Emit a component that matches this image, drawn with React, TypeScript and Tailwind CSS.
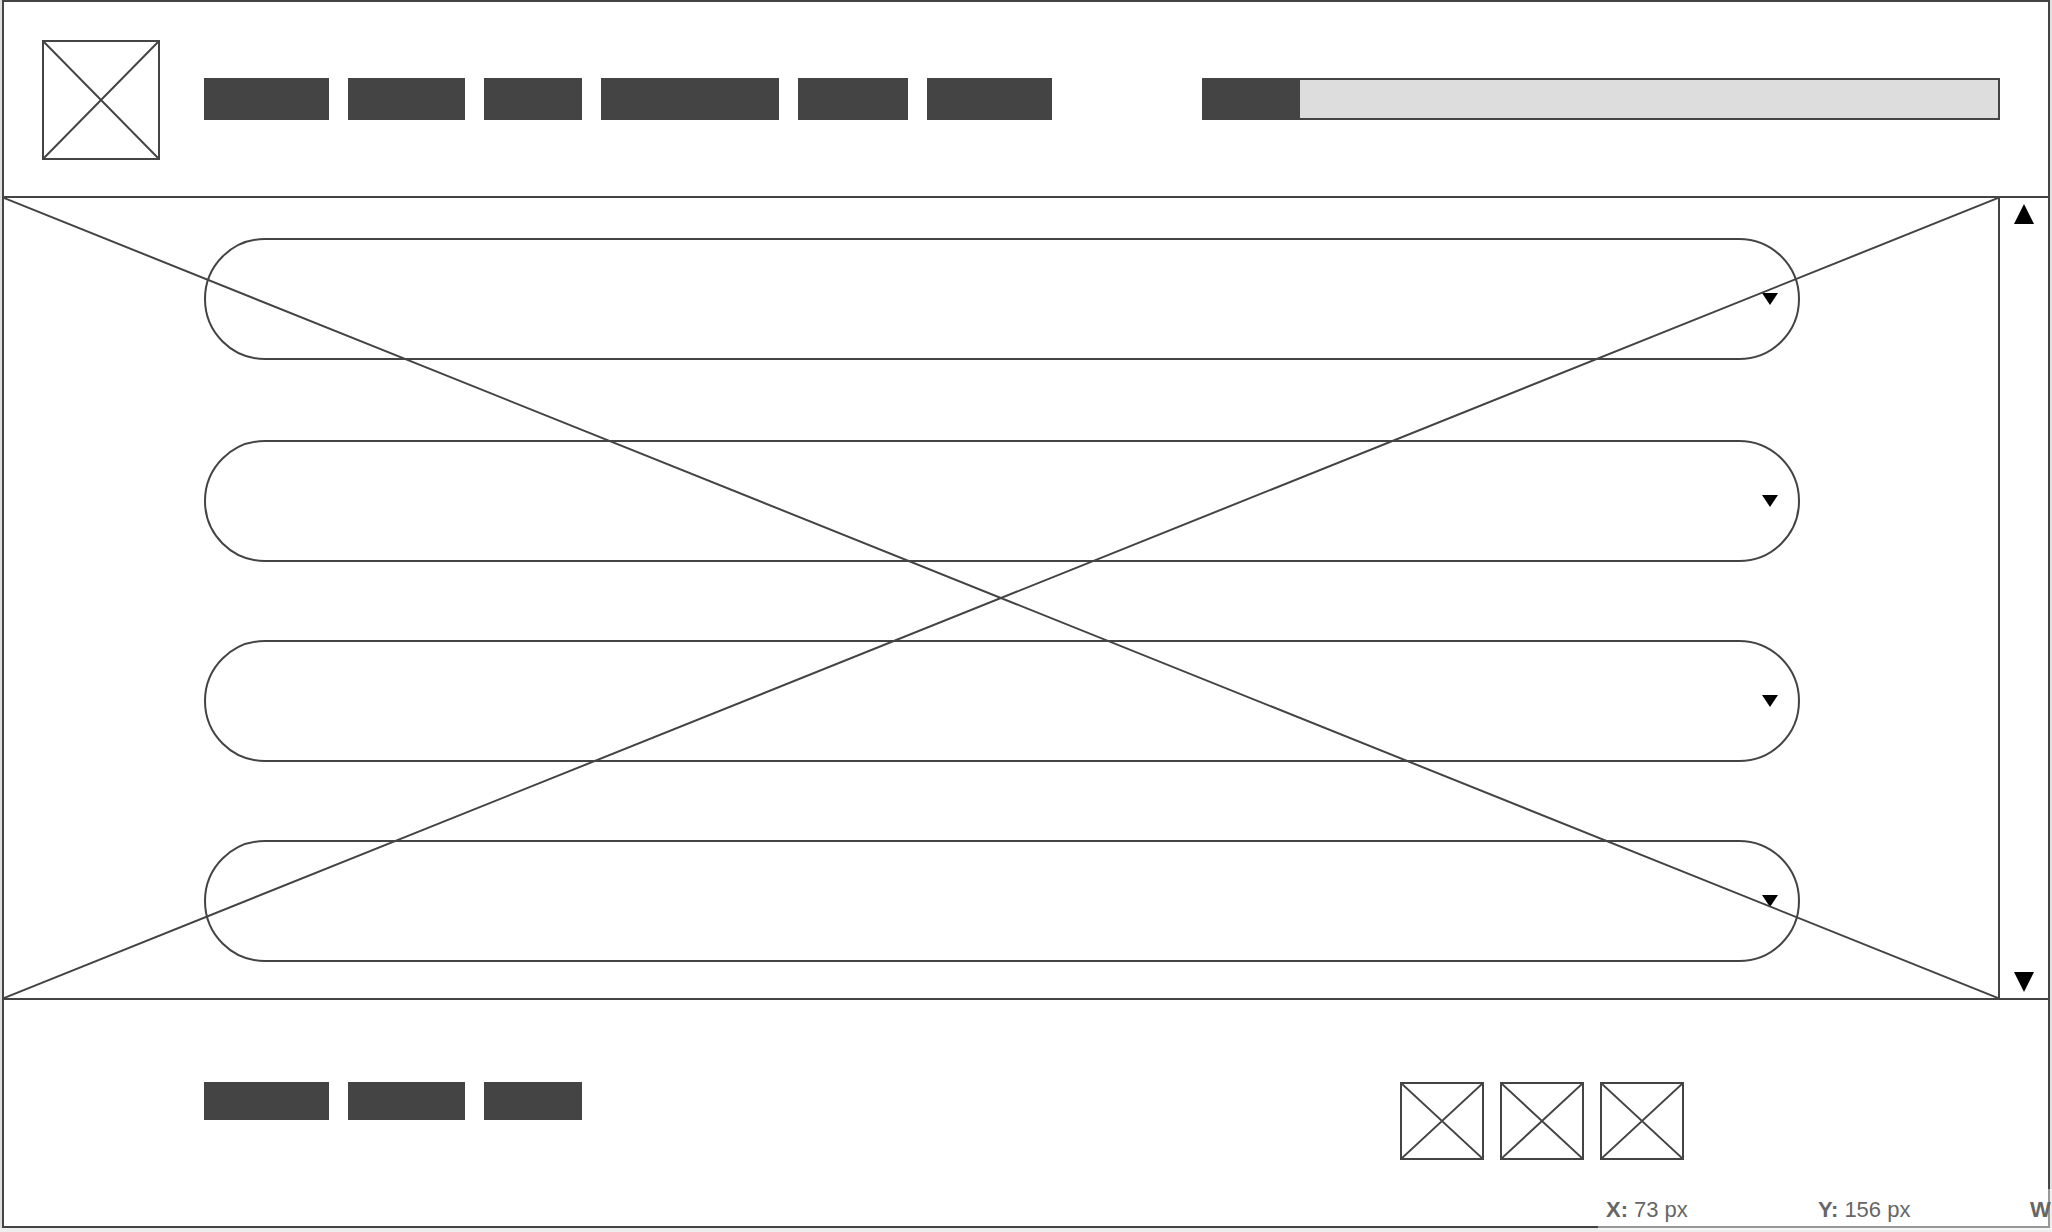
import React from "react";

const navLinks = [
  { name: "Home", width: "w-[125px]" },
  { name: "About", width: "w-[117px]" },
  { name: "News", width: "w-[98px]" },
  { name: "Collections", width: "w-[178px]" },
  { name: "Events", width: "w-[110px]" },
  { name: "Contact", width: "w-[125px]" },
];

const dropdowns = ["First option", "Second option", "Third option", "Fourth option"];
const socialLinks = ["Social one", "Social two", "Social three"];

function Cross() {
  return (
    <svg
      className="pointer-events-none absolute inset-0 h-full w-full"
      viewBox="0 0 100 100"
      preserveAspectRatio="none"
      aria-hidden="true"
    >
      <path
        d="M0 0L100 100M100 0L0 100"
        stroke="#444444"
        strokeWidth="2"
        fill="none"
        vectorEffect="non-scaling-stroke"
      />
    </svg>
  );
}

function NavBar({ links, height, label }: { links: typeof navLinks; height: string; label: string }) {
  return (
    <nav aria-label={label} className="flex shrink-0 gap-[19px]">
      {links.map((link) => (
        <a key={link.name} href="#" aria-label={link.name} className={`block bg-[#444444] ${height} ${link.width}`} />
      ))}
    </nav>
  );
}

function Header() {
  return (
    <header className="flex items-start pt-[38px] pr-12 pb-9 pl-[38px]">
      <a href="#" aria-label="Logo" className="relative block h-[120px] w-[118px] shrink-0 border-2 border-[#444444]">
        <Cross />
      </a>
      <div className="mt-[38px] ml-11 flex flex-1 items-center gap-[150px]">
        <NavBar links={navLinks} height="h-[42px]" label="Main" />
        <form className="flex h-[42px] flex-1" role="search">
          <button type="button" aria-label="Search" className="w-[98px] shrink-0 bg-[#444444]" />
          <input
            type="text"
            aria-label="Search text"
            className="min-w-0 flex-1 border-y-2 border-r-2 border-[#444444] bg-[#dddddd] px-3 outline-none"
          />
        </form>
      </div>
    </header>
  );
}

function Dropdown({ label }: { label: string }) {
  return (
    <div className="relative first:mb-0.5">
      <select
        aria-label={label}
        className="block h-[122px] w-full appearance-none rounded-full border-2 border-[#444444] bg-transparent px-14 outline-none"
      />
      <svg
        className="pointer-events-none absolute top-[55px] right-[22px] h-3 w-4"
        viewBox="0 0 16 12"
        aria-hidden="true"
      >
        <path d="M0 0H16L8 12Z" fill="#000" />
      </svg>
    </div>
  );
}

function Content() {
  return (
    <main className="flex border-y-2 border-[#444444]">
      <div className="relative flex-1 border-r-2 border-[#444444]">
        <div className="flex flex-col gap-[78px] pt-10 pr-[198px] pb-9 pl-[200px]">
          {dropdowns.map((label) => (
            <Dropdown key={label} label={label} />
          ))}
        </div>
        <Cross />
      </div>
      <div className="flex w-12 flex-col items-center justify-between py-1.5">
        <button type="button" aria-label="Scroll up">
          <svg className="block h-5 w-5" viewBox="0 0 20 20">
            <path d="M10 0L20 20H0Z" fill="#000" />
          </svg>
        </button>
        <button type="button" aria-label="Scroll down">
          <svg className="block h-5 w-5" viewBox="0 0 20 20">
            <path d="M0 0H20L10 20Z" fill="#000" />
          </svg>
        </button>
      </div>
    </main>
  );
}

function Footer() {
  return (
    <footer className="flex items-start justify-between pt-[82px] pr-[364px] pb-[66px] pl-[200px]">
      <NavBar links={navLinks.slice(0, 3)} height="h-[38px]" label="Footer" />
      <div className="flex gap-4">
        {socialLinks.map((name) => (
          <a
            key={name}
            href="#"
            aria-label={name}
            className="relative block h-[78px] w-[84px] border-2 border-[#444444]"
          >
            <Cross />
          </a>
        ))}
      </div>
    </footer>
  );
}

function Readout() {
  return (
    <dl className="absolute right-0 bottom-0.5 flex h-[41px] w-[454px] overflow-hidden bg-white/45 pt-2 pl-2 text-[22px] leading-[26px] whitespace-nowrap text-[#666666]">
      <div className="flex w-[212px] shrink-0 gap-1.5">
        <dt className="font-bold">X:</dt>
        <dd>73 px</dd>
      </div>
      <div className="flex w-[212px] shrink-0 gap-1.5">
        <dt className="font-bold">Y:</dt>
        <dd>156 px</dd>
      </div>
      <div className="flex shrink-0">
        <dt className="font-bold">W:</dt>
      </div>
    </dl>
  );
}

export default function App() {
  return (
    <div className="relative bg-[#eeeeee] pb-1 font-['Liberation_Sans',Arial,sans-serif]">
      <div className="bg-[#e0e0e0] px-0.5">
        <div className="border-2 border-[#444444] bg-white">
          <Header />
          <Content />
          <Footer />
        </div>
      </div>
      <Readout />
    </div>
  );
}
